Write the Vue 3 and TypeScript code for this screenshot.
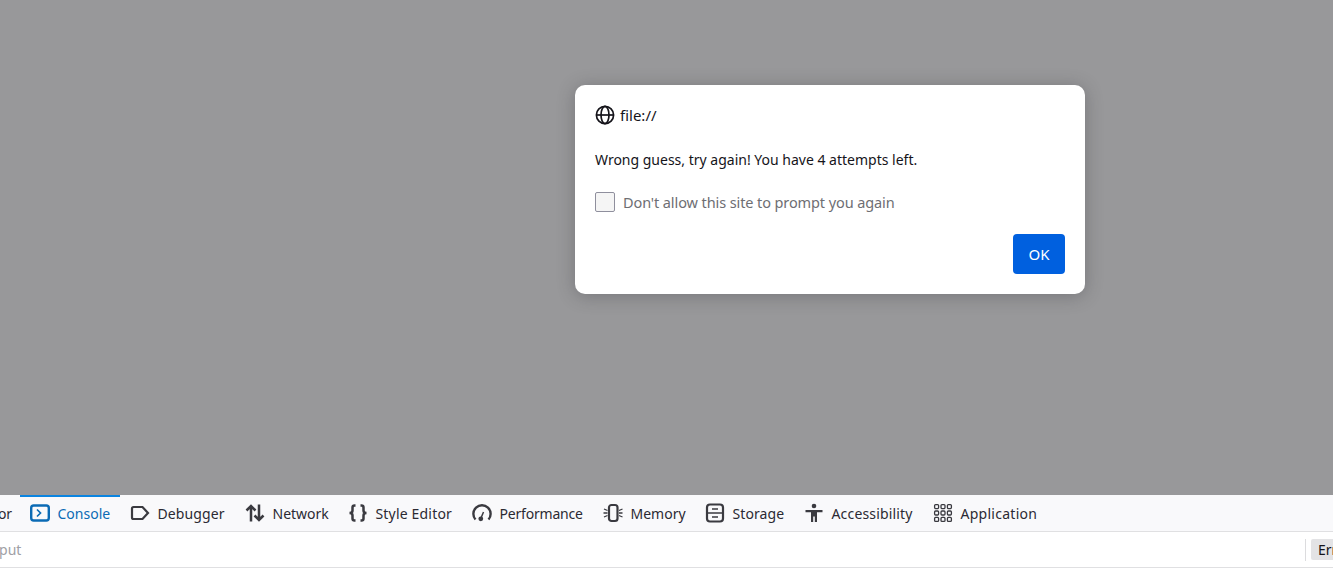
<script setup lang="ts">
interface Tab { id: string; label: string; width: number; spacing?: number; active?: boolean }
const tabs: Tab[] = [
  { id: 'inspector', label: 'Inspector', width: 108 },
  { id: 'console', label: 'Console', width: 100, active: true },
  { id: 'debugger', label: 'Debugger', width: 115, spacing: 0.1 },
  { id: 'network', label: 'Network', width: 103 },
  { id: 'style', label: 'Style Editor', width: 124, spacing: 0.18 },
  { id: 'performance', label: 'Performance', width: 131, spacing: -0.2 },
  { id: 'memory', label: 'Memory', width: 102 },
  { id: 'storage', label: 'Storage', width: 99, spacing: 0.1 },
  { id: 'accessibility', label: 'Accessibility', width: 129, spacing: 0.17 },
  { id: 'application', label: 'Application', width: 124, spacing: 0.27 },
]
</script>

<template>
  <div class="page">
    <main class="content">
      <div class="dialog">
        <div class="origin">
          <svg class="globe" viewBox="0 0 20 20" fill="none" stroke="#15141a" stroke-width="1.7">
            <circle cx="10" cy="10" r="8.6" />
            <ellipse cx="10" cy="10" rx="4" ry="8.6" />
            <path d="M1.4 10h17.2" />
          </svg>
          <span>file://</span>
        </div>
        <p class="message">Wrong guess, try again! You have 4 attempts left.</p>
        <label class="check">
          <span class="box"></span>
          <span>Don't allow this site to prompt you again</span>
        </label>
        <div class="actions">
          <button class="ok">OK</button>
        </div>
      </div>
    </main>
    <nav class="toolbar">
      <div
        v-for="t in tabs"
        :key="t.id"
        class="tab"
        :class="{ active: t.active }"
        :style="{ width: t.width + 'px', letterSpacing: (t.spacing ?? 0) + 'px' }"
      >
        <svg class="icon" viewBox="0 0 20 20" fill="none" stroke="currentColor" stroke-width="2.2">
          <template v-if="t.id === 'console'">
            <rect x="1.2" y="2.5" width="17.6" height="15" rx="2.5" stroke-width="2.4" />
            <path d="M7 6.500l3.500 3.500-3.500 3.500" stroke-width="1.700" />
          </template>
          <path v-else-if="t.id === 'debugger'" d="M3.5 4h9l5.5 6-5.500 6h-9A1.500 1.500 0 0 1 2 14.500v-9A1.500 1.500 0 0 1 3.500 4z" />
          <path v-else-if="t.id === 'network'" stroke-width="2.500" d="M6 18.500V3M1.500 7.500L6 3l4.500 4.500M14 1.500V17M9.500 12.500L14 17l4.500-4.500" />
          <path v-else-if="t.id === 'style'" stroke-width="2.500" d="M7.500 2.500H6.500C5 2.500 4.500 3.300 4.500 4.500v3C4.500 9 3.500 10 1.500 10c2 0 3 1 3 2.500v3c0 1.200.5 2 2 2h1M12.500 2.500h1c1.500 0 2 .8 2 2v3c0 1.500 1 2.500 3 2.500-2 0-3 1-3 2.500v3c0 1.200-.5 2-2 2h-1" />
          <template v-else-if="t.id === 'performance'">
            <path d="M3.500 16.500A8.600 8.600 0 1 1 16.500 16.500" stroke-width="2.400" />
            <path d="M9 15l2.500-6" stroke-width="1.500" />
            <circle cx="8.800" cy="15.800" r="2.400" fill="currentColor" stroke="none" />
          </template>
          <template v-else-if="t.id === 'memory'">
            <rect x="6" y="2" width="8.500" height="16" rx="2.500" />
            <path d="M1 6l3.500 1.500M.5 10H4.500M1 14l3.500-1.500M19.500 6L16 7.500M19.500 10H16M19.500 14L16 12.500" stroke-width="1.300" />
          </template>
          <template v-else-if="t.id === 'storage'">
            <rect x="2" y="1.500" width="16" height="17" rx="3" />
            <path d="M2 10h16M7 6h6M7 14h6" stroke-width="1.500" />
          </template>
          <template v-else-if="t.id === 'accessibility'">
            <circle cx="10" cy="3" r="2.300" fill="currentColor" stroke="none" />
            <path d="M1.500 7h17v2.200H13V19h-2.200v-5.500H9.200V19H7V9.200H1.500z" fill="currentColor" stroke="none" />
          </template>
          <rect v-else-if="t.id === 'inspector'" x="2" y="2" width="16" height="16" rx="2" />
          <g v-else stroke-width="1.300">
            <rect x="1.600" y="1.600" width="4" height="4" rx="1" />
            <rect x="8" y="1.600" width="4" height="4" rx="1" />
            <rect x="14.400" y="1.600" width="4" height="4" rx="1" />
            <rect x="1.600" y="8" width="4" height="4" rx="1" />
            <rect x="8" y="8" width="4" height="4" rx="1" />
            <rect x="14.400" y="8" width="4" height="4" rx="1" />
            <rect x="1.600" y="14.400" width="4" height="4" rx="1" />
            <rect x="8" y="14.400" width="4" height="4" rx="1" />
            <rect x="14.400" y="14.400" width="4" height="4" rx="1" />
          </g>
        </svg>
        <span>{{ t.label }}</span>
      </div>
    </nav>
    <div class="inputrow">
      <span class="placeholder">Filter output</span>
      <div class="filters">
        <span class="sep"></span>
        <span class="chip">Errors</span>
      </div>
    </div>
  </div>
</template>

<style>
html, body { margin: 0; background: #fff; overflow: hidden; }
</style>

<style scoped>
.page {
  width: 1333px;
  height: 587px;
  display: flex;
  flex-direction: column;
  overflow: hidden;
  font-family: "Noto Sans", "Open Sans", sans-serif;
  color: #15141a;
  background: #fff;
}
.content {
  position: relative;
  height: 495px;
  flex: none;
  background: #98989a;
}
.dialog {
  position: absolute;
  left: 575px;
  top: 85px;
  width: 510px;
  height: 209px;
  box-sizing: border-box;
  padding: 20px;
  background: #fff;
  border-radius: 10px;
  box-shadow: 0 2px 18px rgba(40, 40, 45, 0.3);
  display: flex;
  flex-direction: column;
  font-size: 14px;
}
.origin {
  display: flex;
  align-items: center;
  gap: 5px;
  height: 20px;
  font-size: 15px;
}
.globe { width: 20px; height: 20px; flex: none; }
.message {
  margin: 25px 0 0;
  line-height: 20px;
  height: 20px;
}
.check {
  margin-top: 22px;
  display: flex;
  align-items: center;
  gap: 8px;
  height: 20px;
  color: #6e6e73;
  font-size: 14.5px;
  letter-spacing: -0.1px;
}
.box {
  width: 18px;
  height: 18px;
  border: 1px solid #8f8f9d;
  border-radius: 2px;
  background: #f5f5f5;
}
.actions {
  margin-top: auto;
  display: flex;
  justify-content: flex-end;
}
.ok {
  width: 52px;
  height: 40px;
  border: none;
  border-radius: 4px;
  background: #0060df;
  color: #fff;
  font: inherit;
  font-size: 15px;
}
.toolbar {
  flex: none;
  height: 36px;
  display: flex;
  margin-left: -88px;
  background: #f9f9fb;
  border-bottom: 1px solid #e0e0e2;
  font-size: 14px;
  white-space: nowrap;
}
.tab {
  display: flex;
  flex: none;
  align-items: center;
  gap: 7.5px;
  padding: 0 0 2px 10px;
  color: #2b2a33;
  border-top: 2px solid transparent;
  box-sizing: border-box;
}
.tab.active {
  color: #0b6bb5;
  border-top-color: #0a84e0;
}
.icon { width: 20px; height: 20px; flex: none; color: #3a3a40; }
.active .icon { color: #0b6bb5; }
.inputrow {
  flex: none;
  height: 36px;
  display: flex;
  align-items: center;
  justify-content: space-between;
  border-bottom: 1px solid #e0e0e2;
  box-sizing: border-box;
  font-size: 14px;
  overflow: hidden;
}
.placeholder {
  margin-left: -60px;
  color: #a0a0a5;
}
.filters {
  display: flex;
  align-items: center;
  margin-right: -18px;
  gap: 5px;
}
.sep { width: 1px; height: 22px; background: #dcdcde; }
.chip {
  background: #e3e3e5;
  color: #15141a;
  height: 21px;
  line-height: 21px;
  padding-left: 7px;
  border-radius: 2px;
  width: 40px;
  box-sizing: border-box;
  overflow: hidden;
}
</style>
